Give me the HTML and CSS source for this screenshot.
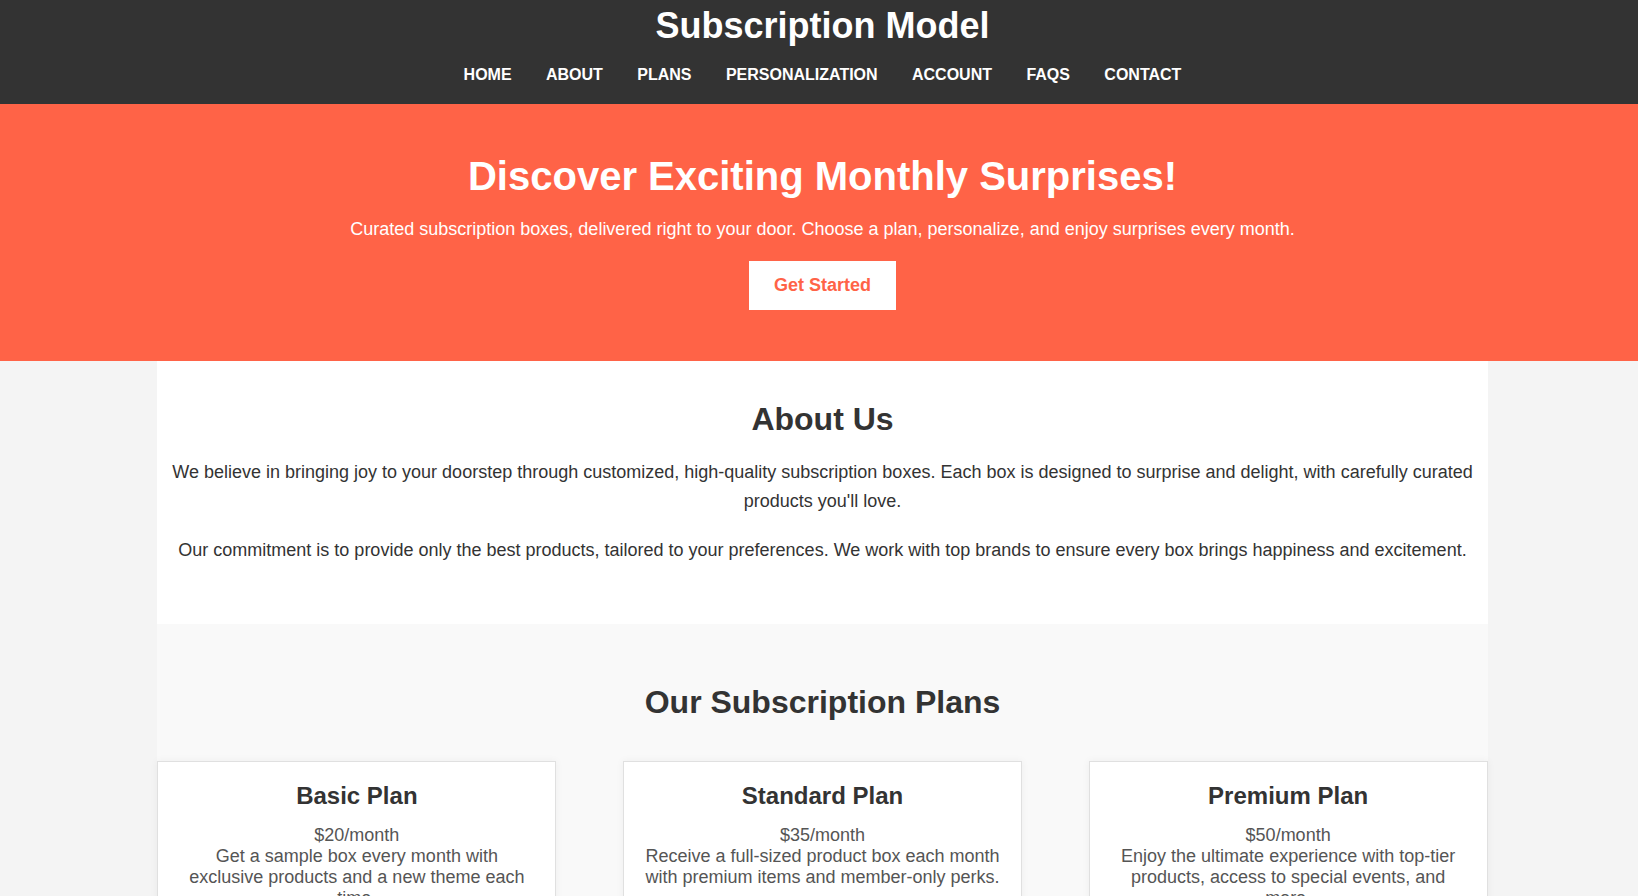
FILE: index.html
```html
<!DOCTYPE html>
<html lang="en">
<head>
<meta charset="UTF-8">
<title>Subscription Model</title>
<link rel="stylesheet" href="styles.css">
</head>
<body>
<header class="site-header">
  <h1 class="site-title">Subscription Model</h1>
  <nav class="main-nav">
    <a href="#">HOME</a>
    <a href="#">ABOUT</a>
    <a href="#">PLANS</a>
    <a href="#">PERSONALIZATION</a>
    <a href="#">ACCOUNT</a>
    <a href="#">FAQS</a>
    <a href="#">CONTACT</a>
  </nav>
</header>
<section class="hero">
  <h2 class="hero-title">Discover Exciting Monthly Surprises!</h2>
  <p class="hero-text">Curated subscription boxes, delivered right to your door. Choose a plan, personalize, and enjoy surprises every month.</p>
  <a class="hero-btn" href="#">Get Started</a>
</section>
<main class="container">
  <section class="about">
    <h2 class="section-title">About Us</h2>
    <p>We believe in bringing joy to your doorstep through customized, high-quality subscription boxes. Each box is designed to surprise and delight, with carefully curated products you'll love.</p>
    <p>Our commitment is to provide only the best products, tailored to your preferences. We work with top brands to ensure every box brings happiness and excitement.</p>
  </section>
  <section class="plans">
    <h2 class="section-title plans-title">Our Subscription Plans</h2>
    <div class="plan-list">
      <div class="plan-card">
        <h3 class="plan-name">Basic Plan</h3>
        <p class="plan-price">$20/month</p>
        <p class="plan-desc">Get a sample box every month with exclusive products and a new theme each time.</p>
      </div>
      <div class="plan-card">
        <h3 class="plan-name">Standard Plan</h3>
        <p class="plan-price">$35/month</p>
        <p class="plan-desc">Receive a full-sized product box each month with premium items and member-only perks.</p>
      </div>
      <div class="plan-card">
        <h3 class="plan-name">Premium Plan</h3>
        <p class="plan-price">$50/month</p>
        <p class="plan-desc">Enjoy the ultimate experience with top-tier products, access to special events, and more.</p>
      </div>
    </div>
  </section>
</main>
</body>
</html>
```

FILE: styles.css
```css
* {
  box-sizing: border-box;
}

body {
  margin: 0;
  background: #f4f4f4;
  color: #333;
  font-family: "Liberation Sans", Arial, sans-serif;
}

.site-header {
  background: #333;
  color: #fff;
  text-align: center;
  padding: 5px 0 20px 7px;
}

.site-title {
  margin: 0;
  font-size: 36px;
  line-height: 41px;
  font-weight: bold;
}

.main-nav {
  display: flex;
  justify-content: center;
  gap: 34.4px;
  margin-top: 20px;
}

.main-nav a {
  color: #fff;
  text-decoration: none;
  font-weight: bold;
  font-size: 16px;
  line-height: 18px;
}

.hero {
  background: #ff6347;
  color: #fff;
  text-align: center;
  padding: 49px 20px 51px 27px;
}

.hero-title {
  margin: 0 0 20px;
  font-size: 40px;
  line-height: 46px;
}

.hero-text {
  margin: 0 0 21px;
  font-size: 18px;
  line-height: 21px;
}

.hero-btn {
  display: inline-block;
  background: #fff;
  color: #ff6347;
  font-weight: bold;
  font-size: 18px;
  line-height: 21px;
  padding: 14px 25px;
  text-decoration: none;
}

.container {
  width: calc(80% + 20px);
  margin: 0 auto 0 calc(10% - 10px + 3.5px);
}

.about {
  background: #fff;
  padding: 40px 15px;
  text-align: center;
}

.section-title {
  margin: 0 0 20px;
  font-size: 32px;
  line-height: 37px;
  color: #333;
}

.about p {
  margin: 0 0 20px;
  font-size: 18px;
  line-height: 28.8px;
  color: #333;
}

.plans {
  background: #f9f9f9;
  padding: 60px 0 40px;
  text-align: center;
}

.plans-title {
  margin-bottom: 40px;
}

.plan-list {
  display: flex;
  justify-content: space-between;
}

.plan-card {
  width: 30%;
  background: #fff;
  border: 1px solid #e0e0e0;
  box-shadow: 0 0 8px rgba(0, 0, 0, 0.05);
  padding: 20px 20px 20px;
}

.plan-name {
  margin: 0 0 15px;
  font-size: 24px;
  line-height: 28px;
  color: #333;
}

.plan-price,
.plan-desc {
  margin: 0;
  font-size: 18px;
  line-height: 21px;
  color: #555;
}
```
